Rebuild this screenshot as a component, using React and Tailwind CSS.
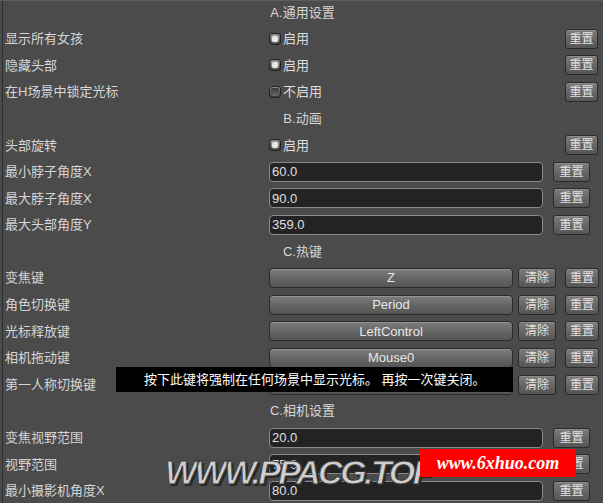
import React from "react";

const FONT = { fontFamily: '"Liberation Sans","Noto Sans CJK SC",sans-serif' };

function ResetBtn({ label = "重置", w = "w-[34px]" }) {
  return (
    <div
      className={`${w} h-[20px] flex items-center justify-center rounded-[3px] border border-[#2a2a2a] bg-gradient-to-b from-[#7c7c7c] via-[#676767] to-[#565656] shadow-[inset_0_1px_0_#8e8e8e] text-[12px] text-[#e2e2e2] leading-none`}
    >
      {label}
    </div>
  );
}

function Toggle({ on }) {
  return (
    <span className="w-[12px] h-[12px] rounded-[3px] border border-[#222] bg-gradient-to-b from-[#8a8a8a] to-[#3a3a3a] flex items-center justify-center mr-[2px]">
      {on ? (
        <span className="w-[6px] h-[6px] rounded-[2px] bg-[#e6e6e6] shadow-[0_0_2px_#fff]" />
      ) : (
        <span className="w-[8px] h-[8px] rounded-[2px] bg-gradient-to-b from-[#3a3a3a] to-[#6a6a6a]" />
      )}
    </span>
  );
}

function Row({ label, children }) {
  return (
    <div className="h-[26.6px] flex items-center">
      <div className="w-[269px] pl-[5px] text-[13px] text-[#d6d6d6] whitespace-nowrap">{label}</div>
      {children}
    </div>
  );
}

function Header({ text }) {
  return (
    <div className="h-[26.6px] flex items-center justify-center pl-[2px] text-[13px] text-[#d6d6d6]">
      {text}
    </div>
  );
}

function ToggleRow({ label, on, text }) {
  return (
    <Row label={label}>
      <div className="flex-1 flex items-center text-[13px] text-[#dcdcdc]">
        <Toggle on={on} />
        {text}
      </div>
      <div className="mr-[5px]">
        <ResetBtn w="w-[33px]" />
      </div>
    </Row>
  );
}

function FieldRow({ label, value }) {
  return (
    <Row label={label}>
      <div className="w-[274px] h-[20px] rounded-[4px] border border-[#8a8a8a] bg-[#232323] flex items-center pl-[2px] text-[13px] text-[#e0e0e0]">
        {value}
      </div>
      <div className="ml-[10px]">
        <ResetBtn w="w-[37px]" />
      </div>
    </Row>
  );
}

function KeyRow({ label, value }) {
  return (
    <Row label={label}>
      <div className="w-[244px] h-[20px] rounded-[4px] border border-[#2a2a2a] bg-gradient-to-b from-[#7e7e7e] via-[#666666] to-[#555555] shadow-[inset_0_1px_0_#939393] flex items-center justify-center text-[13px] text-[#e8e8e8]">
        {value}
      </div>
      <div className="ml-[5px]">
        <ResetBtn label="清除" w="w-[38px]" />
      </div>
      <div className="ml-[9px]">
        <ResetBtn w="w-[34px]" />
      </div>
    </Row>
  );
}

export default function App() {
  return (
    <div
      style={FONT}
      className="relative w-[603px] h-[503px] overflow-hidden bg-[#4b4b4b] border-t border-t-[#5e5e5e]"
    >
      <div className="absolute left-[2px] top-0 bottom-0 w-[1px] bg-[#2e2e2e]" />
      <div className="flex flex-col -mt-[2px]">
        <Header text="A.通用设置" />
        <ToggleRow label="显示所有女孩" on text="启用" />
        <ToggleRow label="隐藏头部" on text="启用" />
        <ToggleRow label="在H场景中锁定光标" on={false} text="不启用" />
        <Header text="B.动画" />
        <ToggleRow label="头部旋转" on text="启用" />
        <FieldRow label="最小脖子角度X" value="60.0" />
        <FieldRow label="最大脖子角度X" value="90.0" />
        <FieldRow label="最大头部角度Y" value="359.0" />
        <Header text="C.热键" />
        <KeyRow label="变焦键" value="Z" />
        <KeyRow label="角色切换键" value="Period" />
        <KeyRow label="光标释放键" value="LeftControl" />
        <KeyRow label="相机拖动键" value="Mouse0" />
        <KeyRow label="第一人称切换键" value="" />
        <Header text="C.相机设置" />
        <FieldRow label="变焦视野范围" value="20.0" />
        <FieldRow label="视野范围" value="75.0" />
        <FieldRow label="最小摄影机角度X" value="80.0" />
      </div>

      {/* tooltip */}
      <div className="absolute left-[116px] top-[366px] w-[397px] h-[25px] bg-black flex items-center pl-[28px] text-[13px] text-white whitespace-nowrap">
        按下此键将强制在任何场景中显示光标。 再按一次键关闭。
      </div>

      {/* watermark */}
      <div
        className="absolute left-[165px] top-[454px] text-[34px] font-bold italic tracking-[-2.5px] leading-none text-[#cfcfcf] [-webkit-text-stroke:1px_#3a3a3a] [text-shadow:2px_2px_0_#262626]"
        style={{ fontFamily: '"Liberation Sans",sans-serif' }}
      >
        WWW.PPACG.TOP
      </div>
      <div className="absolute left-[420px] top-[448px] w-[156px] h-[28px] bg-[#ff0000] flex items-center justify-center">
        <span
          className="text-[18px] font-bold italic text-white leading-none"
          style={{ fontFamily: '"Liberation Serif",serif' }}
        >
          www.6xhuo.com
        </span>
      </div>
    </div>
  );
}
